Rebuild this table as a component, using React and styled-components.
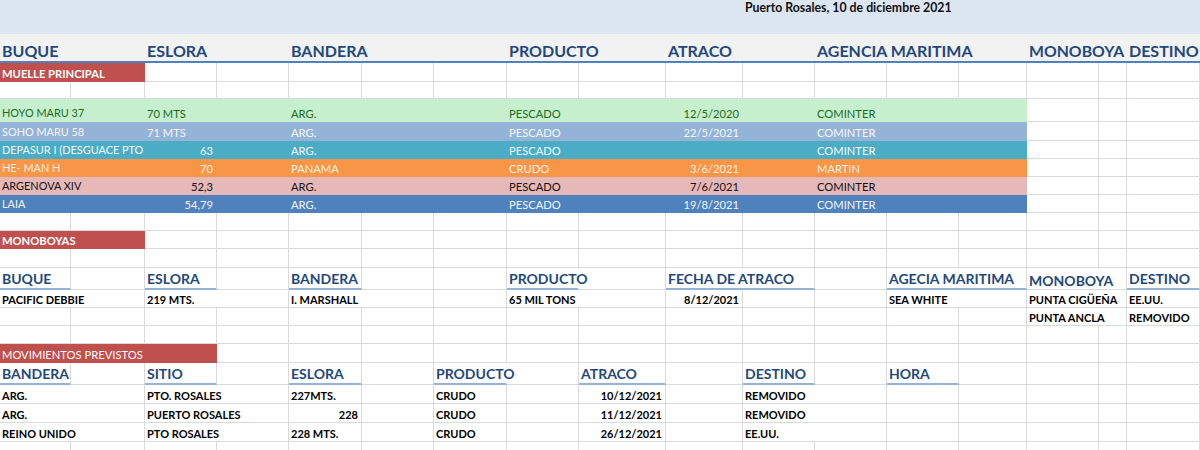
import React from "react";
import styled, { createGlobalStyle } from "styled-components";

const COLS = [71, 74, 72, 72, 73, 72, 73, 72, 87, 77, 72, 72, 72, 68, 72, 28, 73];
const GRID = "#d9dadb";
const BLUE_TEXT = "#1f497d";

const GlobalStyle = createGlobalStyle`
  html, body {
    margin: 0;
    padding: 0;
    background: #fff;
    overflow: hidden;
  }
  body {
    font-family: Lato, "Open Sans", "Liberation Sans", sans-serif;
  }
`;

const Sheet = styled.div`
  width: 1200px;
  height: 450px;
  overflow: hidden;
  display: flex;
  flex-direction: column;
`;

const TitleBand = styled.div`
  flex: none;
  height: 34px;
  background: #dce6f1;
  display: flex;
  padding-left: 745px;
  padding-top: 1px;
  box-sizing: border-box;
`;

const Title = styled.span`
  font-size: 12.3px;
  font-weight: 700;
  color: #111;
  line-height: 14px;
`;

const Row = styled.div`
  flex: none;
  display: grid;
  grid-template-columns: ${COLS.map((c) => c + "px").join(" ")};
  grid-template-rows: 100%;
  height: ${(p) => p.$h}px;
  background: ${(p) => p.$bg || "transparent"};
  border-bottom: ${(p) => (p.$rule ? `2px solid ${p.$rule}` : "none")};
`;

const Cell = styled.div`
  grid-row: 1;
  grid-column: ${(p) => p.$col + 1} / span ${(p) => p.$span || 1};
  position: relative;
  z-index: ${(p) => (p.$spill ? 1 : 0)};
  box-sizing: border-box;
  display: flex;
  align-items: flex-end;
  justify-content: ${(p) => (p.$right ? "flex-end" : "flex-start")};
  padding: 0 3px 2px 2px;
  white-space: nowrap;
  overflow: ${(p) => (p.$spill ? "visible" : "hidden")};
  background: ${(p) => p.$fill || "transparent"};
  border-right: 1px solid
    ${(p) => (p.$noGrid || p.$spill ? "transparent" : p.$fill || GRID)};
  border-bottom: ${(p) =>
    p.$under ? `2px solid ${p.$under}` : `1px solid ${p.$noGrid ? "transparent" : p.$fill || GRID}`};
  color: ${(p) => p.$color || "#000"};
  font-size: ${(p) => p.$size || 11.2}px;
  font-weight: ${(p) => (p.$bold ? 700 : 400)};
  line-height: 1;
`;

const HeadCell = styled(Cell)`
  color: ${BLUE_TEXT};
  font-weight: 700;
  padding-bottom: ${(p) => (p.$under ? 2 : 1)}px;
`;

// fills the empty columns of a row so the gridlines show
const SheetRow = ({ h, cells = [], fill, fillTo = 0, head, rule, bg, noGrid }) => {
  const taken = new Array(COLS.length).fill(false);
  cells.forEach((c) => {
    for (let i = c.col; i < c.col + (c.span || 1); i++) taken[i] = true;
  });
  const Comp = head ? HeadCell : Cell;
  const out = cells.map((c, i) => (
    <Comp
      key={"c" + i}
      $col={c.col}
      $span={c.span}
      $right={c.right}
      $fill={c.fill || (c.col < fillTo ? fill : undefined)}
      $color={c.color}
      $bold={c.bold}
      $size={c.size}
      $under={c.under}
      $spill={c.spill}
      $noGrid={noGrid}
    >
      {c.text}
    </Comp>
  ));
  for (let i = 0; i < COLS.length; i++) {
    if (!taken[i]) {
      out.push(<Cell key={"e" + i} $col={i} $fill={i < fillTo ? fill : undefined} $noGrid={noGrid} />);
    }
  }
  return (
    <Row $h={h} $bg={bg} $rule={rule}>
      {out}
    </Row>
  );
};

const ships = [
  { fill: "#c6efce", color: "#1e6b1e", h: 23, v: ["HOYO MARU 37", "70 MTS", "ARG.", "PESCADO", "12/5/2020", "COMINTER"], num: false },
  { fill: "#95b3d7", color: "#f4f7fb", h: 19, v: ["SOHO MARU 58", "71 MTS", "ARG.", "PESCADO", "22/5/2021", "COMINTER"], num: false },
  { fill: "#4bacc6", color: "#f4fbfd", h: 18, v: ["DEPASUR I (DESGUACE PTO", "63", "ARG.", "PESCADO", "", "COMINTER"], num: true },
  { fill: "#f79646", color: "#fdf0e4", h: 18, v: ["HE- MAN H", "70", "PANAMA", "CRUDO", "3/6/2021", "MARTIN"], num: true },
  { fill: "#e6b8b7", color: "#111", h: 18, v: ["ARGENOVA XIV", "52,3", "ARG.", "PESCADO", "7/6/2021", "COMINTER"], num: true },
  { fill: "#4f81bd", color: "#f4f7fb", h: 18, v: ["LAIA", "54,79", "ARG.", "PESCADO", "19/8/2021", "COMINTER"], num: true },
];

const RED = "#c0504d";
const UNDER = "#95b3d7";
const TOP = 16;
const SUB = 14;
const DATA = 11;
const PLAIN = 10.9;

const App = () => {
  return (
    <Sheet>
      <GlobalStyle />
      <TitleBand>
        <Title>Puerto Rosales, 10 de diciembre 2021</Title>
      </TitleBand>

      <SheetRow
        h={27}
        bg="#f2f2f2"
        rule="#4f81bd"
        noGrid
        head
        cells={[
          { col: 0, span: 2, text: "BUQUE", size: TOP },
          { col: 2, span: 2, text: "ESLORA", size: TOP },
          { col: 4, span: 3, text: "BANDERA", size: TOP },
          { col: 7, span: 2, text: "PRODUCTO", size: TOP },
          { col: 9, span: 2, text: "ATRACO", size: TOP },
          { col: 11, span: 3, text: "AGENCIA MARITIMA", size: TOP },
          { col: 14, span: 2, text: "MONOBOYA", size: 15.8 },
          { col: 16, text: "DESTINO", size: TOP },
        ]}
      />

      <SheetRow h={19} cells={[{ col: 0, span: 2, text: "MUELLE PRINCIPAL", fill: RED, color: "#fff", bold: true }]} />
      <SheetRow h={17} />

      {ships.map((s) => (
        <SheetRow
          key={s.v[0]}
          h={s.h}
          fill={s.fill}
          fillTo={14}
          cells={[
            { col: 0, span: 2, text: s.v[0], color: s.color, size: PLAIN },
            { col: 2, span: s.num ? 1 : 2, text: s.v[1], color: s.color, right: s.num },
            { col: 4, span: 3, text: s.v[2], color: s.color },
            { col: 7, span: 2, text: s.v[3], color: s.color },
            { col: 9, text: s.v[4], color: s.color, right: true },
            { col: 11, span: 3, text: s.v[5], color: s.color },
          ]}
        />
      ))}

      <SheetRow h={18} />
      <SheetRow h={18} cells={[{ col: 0, span: 2, text: "MONOBOYAS", fill: RED, color: "#fff", bold: true }]} />
      <SheetRow h={19} />

      <SheetRow
        h={22}
        head
        cells={[
          { col: 0, text: "BUQUE", under: UNDER, size: SUB },
          { col: 2, text: "ESLORA", under: UNDER, size: SUB },
          { col: 4, text: "BANDERA", under: UNDER, size: SUB },
          { col: 7, text: "PRODUCTO", under: UNDER, size: SUB, spill: true },
          { col: 9, span: 2, text: "FECHA DE ATRACO", under: UNDER, size: SUB },
          { col: 12, span: 2, text: "AGECIA MARITIMA", under: UNDER, size: SUB },
          { col: 14, span: 2, text: "MONOBOYA", size: SUB },
          { col: 16, text: "DESTINO", under: UNDER, size: SUB },
        ]}
      />
      <SheetRow
        h={18}
        cells={[
          { col: 0, span: 2, text: "PACIFIC DEBBIE", bold: true, size: DATA },
          { col: 2, span: 2, text: "219 MTS.", bold: true, size: DATA },
          { col: 4, span: 2, text: "I. MARSHALL", bold: true, size: DATA },
          { col: 7, span: 2, text: "65 MIL TONS", bold: true, size: DATA },
          { col: 9, text: "8/12/2021", bold: true, size: DATA, right: true },
          { col: 12, span: 2, text: "SEA WHITE", bold: true, size: DATA },
          { col: 14, span: 2, text: "PUNTA CIGÜEÑA", bold: true, size: DATA },
          { col: 16, text: "EE.UU.", bold: true, size: DATA },
        ]}
      />
      <SheetRow
        h={18}
        cells={[
          { col: 14, span: 2, text: "PUNTA ANCLA", bold: true, size: DATA },
          { col: 16, text: "REMOVIDO", bold: true, size: DATA },
        ]}
      />
      <SheetRow h={18} />
      <SheetRow h={19} cells={[{ col: 0, span: 3, text: "MOVIMIENTOS PREVISTOS", fill: RED, color: "#fff", size: 11.2 }]} />

      <SheetRow
        h={22}
        head
        cells={[
          { col: 0, text: "BANDERA", under: UNDER, size: SUB },
          { col: 2, text: "SITIO", under: UNDER, size: SUB },
          { col: 4, text: "ESLORA", under: UNDER, size: SUB },
          { col: 6, text: "PRODUCTO", under: UNDER, size: SUB, spill: true },
          { col: 8, text: "ATRACO", under: UNDER, size: SUB },
          { col: 10, text: "DESTINO", under: UNDER, size: SUB },
          { col: 12, text: "HORA", under: UNDER, size: SUB },
        ]}
      />
      {[
        ["ARG.", "PTO. ROSALES", "227MTS.", "CRUDO", "10/12/2021", "REMOVIDO", false],
        ["ARG.", "PUERTO ROSALES", "228", "CRUDO", "11/12/2021", "REMOVIDO", true],
        ["REINO UNIDO", "PTO ROSALES", "228 MTS.", "CRUDO", "26/12/2021", "EE.UU.", false],
      ].map((r, i) => (
        <SheetRow
          key={i}
          h={19}
          cells={[
            { col: 0, span: 2, text: r[0], bold: true, size: DATA },
            { col: 2, span: 2, text: r[1], bold: true, size: DATA },
            { col: 4, text: r[2], bold: true, size: DATA, right: r[6] },
            { col: 6, text: r[3], bold: true, size: DATA },
            { col: 8, text: r[4], bold: true, size: DATA, right: true },
            { col: 10, span: 2, text: r[5], bold: true, size: DATA },
          ]}
        />
      ))}
      <SheetRow h={19} />
    </Sheet>
  );
};

export default App;
